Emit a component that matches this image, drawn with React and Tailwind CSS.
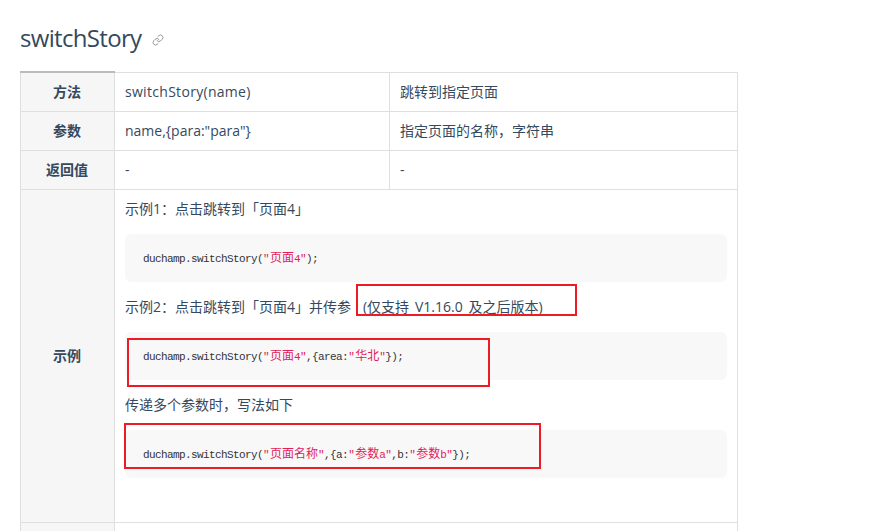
import { Link } from 'lucide-react'

const HEAD_CELL = 'border border-[#dfdfdf] bg-[#f6f6f6] pr-px text-center font-bold text-[#34495e]'
const CELL = 'border border-[#dfdfdf] px-2.5 text-[#34495e]'
const ROWS = [
  { head: '方法', a: 'switchStory(name)', b: '跳转到指定页面', track: 'tracking-[0.3px]' },
  { head: '参数', a: 'name,{para:"para"}', b: '指定页面的名称，字符串', track: '' },
  { head: '返回值', a: '-', b: '-', track: '' },
]

// latin in the code blocks has a 6px advance, cjk 12px
function Red({ children }) {
  return <span className="text-[#e01e5a]">{children}</span>
}

function Cn({ children }) {
  return <span className="ml-px text-[12px] tracking-normal">{children}</span>
}

function CodeBlock({ children }) {
  return (
    <pre className="h-12 rounded-md bg-[#f8f8f8] pl-[18px] pt-[17px] font-['Liberation_Mono','Noto_Sans_CJK_SC',monospace] text-[11px] leading-4 tracking-[-0.6px] text-[#333]">
      {children}
    </pre>
  )
}

function Note({ className, children }) {
  return <p className={`h-6 leading-6 ${className}`}>{children}</p>
}

export default function App() {
  return (
    <main className="relative h-[531px] overflow-hidden bg-white px-5 pt-6 font-['Open_Sans','Noto_Sans_CJK_SC',sans-serif] text-sm text-[#34495e]">
      <h1 className="flex h-[27px] items-center gap-[11px] text-[24px] leading-[27px] tracking-[-0.68px]">
        switchStory
        <Link size={12} className="mt-1 text-[#999]" />
      </h1>

      <table className="mt-5 w-[718px] table-fixed border-collapse">
        <colgroup>
          <col className="w-[94px]" />
          <col className="w-[275px]" />
          <col />
        </colgroup>
        <tbody>
          {ROWS.map((row, i) => (
            <tr key={row.head} className="h-[39px]">
              <td className={`${HEAD_CELL} ${i === 0 ? 'border-t-2 border-t-[#bbb]' : ''}`}>{row.head}</td>
              <td className={`${CELL} ${row.track}`}>{row.a}</td>
              <td className={CELL}>{row.b}</td>
            </tr>
          ))}
          <tr className="h-[333px]">
            <td className={HEAD_CELL}>示例</td>
            <td colSpan={2} className={`${CELL} pt-[7px] pb-[32px] align-top`}>
              <Note className="mb-[13px]">示例1：点击跳转到「页面4」</Note>
              <CodeBlock>duchamp.switchStory(<Red>"<Cn>页面</Cn>4"</Red>);</CodeBlock>
              <Note className="my-[13px] [word-spacing:2.3px]">示例2：点击跳转到「页面4」并传参&nbsp;&nbsp;(仅支持 V1.16.0 及之后版本)</Note>
              <CodeBlock>duchamp.switchStory(<Red>"<Cn>页面</Cn>4"</Red>,{'{'}area:<Red>"<Cn>华北</Cn>"</Red>{'}'});</CodeBlock>
              <Note className="my-[13px]">传递多个参数时，写法如下</Note>
              <CodeBlock>duchamp.switchStory(<Red>"<Cn>页面名称</Cn>"</Red>,{'{'}a:<Red>"<Cn>参数</Cn>a"</Red>,b:<Red>"<Cn>参数</Cn>b"</Red>{'}'});</CodeBlock>
            </td>
          </tr>
          <tr className="h-[39px]">
            <td className={HEAD_CELL} />
            <td colSpan={2} className={CELL} />
          </tr>
        </tbody>
      </table>

      {/* red annotation boxes drawn over the screenshot */}
      <div className="absolute left-[356px] top-[284px] h-8 w-[221px] border-2 border-[#ed1c24]" />
      <div className="absolute left-[127px] top-[338px] h-[49px] w-[363px] border-2 border-[#ed1c24]" />
      <div className="absolute left-[124px] top-[423px] h-[46px] w-[417px] border-2 border-[#ed1c24]" />
    </main>
  )
}
